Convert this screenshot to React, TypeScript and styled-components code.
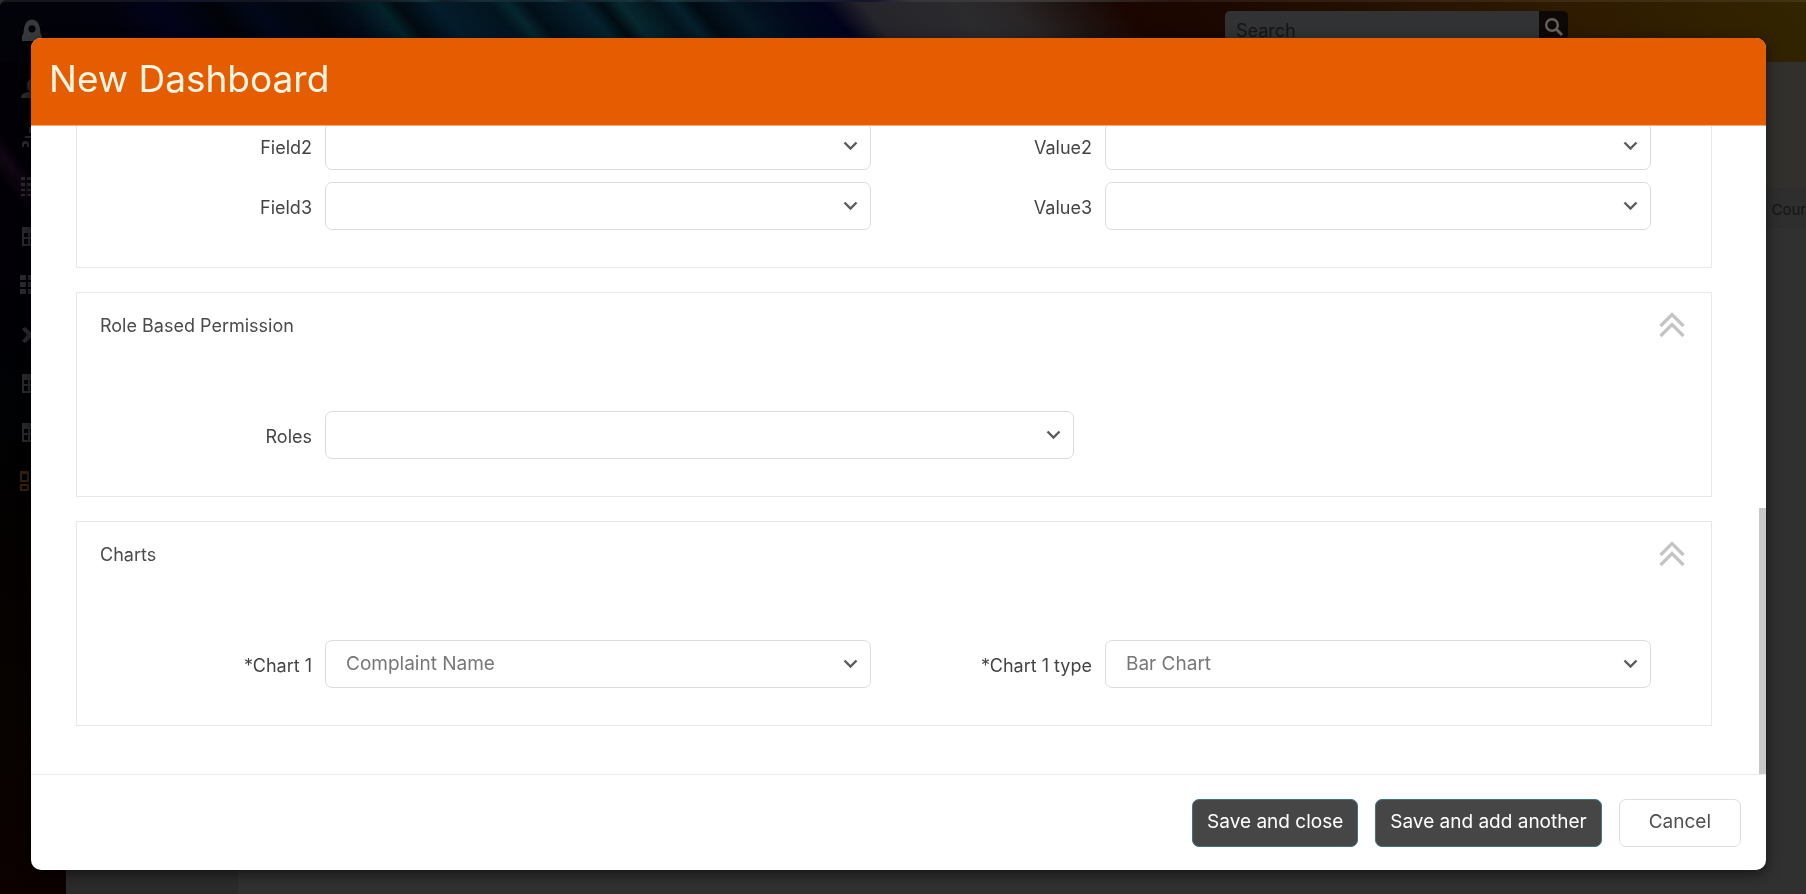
import React, { useId } from 'react';
import styled, { createGlobalStyle } from 'styled-components';

const GlobalStyle = createGlobalStyle`
  *, *::before, *::after { box-sizing: border-box; }
  html, body { margin: 0; height: 100%; background: #2f2f30; }
  body { font-family: Inter, "Open Sans", sans-serif; font-size: 18px; line-height: 24px; color: #444; overflow: hidden; }
  button, input, select { font-family: inherit; margin: 0; }
`;

/* ---------- dimmed application behind the dialog ---------- */

const Shell = styled.div`
  min-height: 100vh;
  display: grid;
  grid-template-columns: 66px 1fr;
  grid-template-rows: 62px 1fr;
  overflow: hidden;
`;

const TopBar = styled.header`
  grid-column: 1 / -1;
  display: flex;
  justify-content: flex-end;
  align-items: flex-start;
  padding: 11px 238px 0 0;
  border-top: 2px solid rgba(255, 255, 255, 0.08);
  border-top-left-radius: 6px;
  background: linear-gradient(
    50deg,
    #020208 0%, #02020c 8%, #02031a 11%, #010308 14%, #02081a 16%, #01050c 19%,
    #020c18 21%, #04222a 23%, #010a10 24%, #041c2c 26%, #02141e 29%, #05262e 30%,
    #020e18 31%, #05222e 34%, #010c12 35%, #06282e 36%, #03141e 38%, #04202c 39%,
    #010a12 40%, #041824 42%, #020c1c 44%, #02021c 47%, #24242a 49%, #2b2b2e 54%,
    #292526 57%, #1e1412 60%, #1a0500 63%, #1c0700 67%, #241000 76%, #2e1a00 86%,
    #332500 100%
  );
`;

const SearchForm = styled.form`
  display: flex;
  width: 343px;
  height: 36px;
  margin-top: -2px;
`;

const SearchInput = styled.input`
  flex: 1;
  min-width: 0;
  border: 0;
  border-radius: 5px 0 0 5px;
  padding: 2px 11px 0;
  background: #313234;
  color: #161616;
  font-size: 18px;
  &::placeholder { color: #161616; opacity: 1; }
`;

const SearchButton = styled.button`
  width: 29px;
  border: 0;
  padding: 0 0 4px;
  border-radius: 0 5px 5px 0;
  background: #0e0806;
  color: #65625f;
  display: flex;
  align-items: center;
  justify-content: center;
`;

const SideBar = styled.nav`
  display: flex;
  flex-direction: column;
  gap: 25px;
  padding: 16px 0 0 20px;
  background:
    linear-gradient(52deg, transparent 38%, rgba(70, 30, 70, 0.22) 46%, transparent 52%) 0 0 / 100% 240px no-repeat,
    linear-gradient(#020006 0%, #020006 26%, #000204 40%, #050100 60%, #070300 78%, #0c0100 100%);
`;

const SideLink = styled.a<{ $active?: boolean }>`
  display: flex;
  height: 24px;
  color: ${({ $active }) => ($active ? '#36200d' : '#2b2b2e')};
`;

const BrandLink = styled.a`
  position: absolute;
  left: 20px;
  top: 19px;
  height: 24px;
  color: #38393b;
`;

const PageArea = styled.main`
  display: grid;
  grid-template-columns: 172px 1fr;
  grid-template-rows: 126px 40px 1fr;
  background: #303031;
`;

const PageTitleBand = styled.div`
  grid-column: 1 / -1;
  background: #32302d;
`;

const ColumnHeader = styled.div`
  grid-column: 1 / -1;
  display: flex;
  justify-content: flex-end;
  align-items: center;
  padding-top: 4px;
  background: #2e2e2f;
  color: #151515;
  font-size: 15px;
`;

const FilterPane = styled.div`
  background: #2b2b2c;
`;

/* ---------- dialog ---------- */

const Overlay = styled.div`
  position: fixed;
  inset: 0;
  padding: 38px 40px 24px 31px;
  display: flex;
`;

const Dialog = styled.section`
  flex: 1;
  min-width: 0;
  display: flex;
  flex-direction: column;
  border-radius: 10px;
  overflow: hidden;
  background: #fff;
  box-shadow: 0 4px 14px rgba(0, 0, 0, 0.55);
`;

const DialogHeader = styled.header`
  flex: none;
  height: 88px;
  padding: 19px 18px 0;
  background: #e65c00;
  border-bottom: 1px solid #f3ad80;
`;

const DialogTitle = styled.h1`
  margin: 0;
  font-size: 37px;
  line-height: 44px;
  font-weight: 400;
  color: #fff6e4;
`;

const DialogBody = styled.div`
  position: relative;
  flex: 1;
  min-height: 0;
  overflow: hidden;
  display: flex;
  flex-direction: column;
  justify-content: flex-end;
  gap: 24px;
  padding: 0 54px 48px 45px;
`;

const ScrollThumb = styled.div`
  position: absolute;
  right: 0;
  bottom: 0;
  width: 7px;
  height: 41%;
  background: #c8c9c9;
`;

const Panel = styled.section`
  flex: none;
  border: 1px solid #e8e8e8;
  padding: 0 60px 37px 14px;
`;

const PanelHeader = styled.header`
  display: flex;
  justify-content: space-between;
  align-items: flex-start;
  height: 118px;
  margin-right: -34px;
  padding: 19px 0 0 9px;
`;

const PanelTitle = styled.h2`
  margin: 2px 0 0;
  font-size: 18px;
  line-height: 24px;
  font-weight: 400;
  color: #4a4a4a;
`;

const CollapseButton = styled.button`
  border: 0;
  padding: 0;
  width: 26px;
  height: 26px;
  background: none;
  color: #c4c4c4;
`;

const FieldGrid = styled.div`
  display: grid;
  grid-template-columns: 1fr 1fr;
  row-gap: 12px;
`;

const FieldCell = styled.div<{ $wide?: boolean }>`
  grid-column: ${({ $wide }) => ($wide ? '1 / -1' : 'auto')};
  display: grid;
  grid-template-columns: ${({ $wide }) => ($wide ? '15% 48%' : '30% 70%')};
`;

const FieldLabel = styled.label`
  padding: 14px 13px 0 0;
  text-align: right;
  color: #444;
`;

const SelectWrap = styled.div`
  position: relative;
  & > svg {
    position: absolute;
    right: 13px;
    top: 19px;
    pointer-events: none;
  }
`;

const Select = styled.select`
  appearance: none;
  display: block;
  width: 100%;
  height: 48px;
  padding: 0 40px 2px 20px;
  border: 1px solid #dcdcdc;
  border-radius: 7px;
  background: #fff;
  color: #777;
  font-size: 19px;
`;

const DialogFooter = styled.footer`
  flex: none;
  display: flex;
  justify-content: flex-end;
  gap: 17px;
  height: 96px;
  padding: 24px 25px 0;
  border-top: 1px solid #ececec;
`;

const Button = styled.button<{ $primary?: boolean }>`
  height: 48px;
  padding: 0 ${({ $primary }) => ($primary ? '14px' : '29px')} 3px;
  border: 1px solid ${({ $primary }) => ($primary ? '#3f7583' : '#dedede')};
  border-radius: 7px;
  background: ${({ $primary }) => ($primary ? '#464646' : '#fff')};
  color: ${({ $primary }) => ($primary ? '#fff' : '#505050')};
  font-size: 19px;
  white-space: nowrap;
`;

/* ---------- icons ---------- */

const Chevron = () => (
  <svg width="15" height="10" viewBox="0 0 15 10" fill="none" stroke="#5c5c5c" strokeWidth="2.4" aria-hidden="true">
    <path d="M1.5 1.5 7.5 7.5 13.5 1.5" />
  </svg>
);

const DoubleChevron = () => (
  <svg width="26" height="26" viewBox="0 0 26 26" fill="none" stroke="currentColor" strokeWidth="3.2" aria-hidden="true">
    <path d="M1.5 14 13 2.5 24.5 14M1.5 24 13 12.5 24.5 24" />
  </svg>
);

const Magnifier = () => (
  <svg width="20" height="20" viewBox="0 0 20 20" fill="none" stroke="currentColor" strokeWidth="2.4" aria-hidden="true">
    <circle cx="8" cy="8" r="5.8" />
    <path d="M12.3 12.3 18 18" strokeWidth="3" />
  </svg>
);

const BrandIcon = () => (
  <svg width="22" height="24" viewBox="0 0 22 24" fill="currentColor" aria-hidden="true">
    <path
      fillRule="evenodd"
      d="M2 22v-4.5l1.6-3.4C3.6 7 6 1 12 .6 18 1 20.4 7 20.4 14.1L22 17.5V22zM12 6.2a3.6 3.6 0 1 0 0 7.2 3.6 3.6 0 0 0 0-7.2z"
    />
  </svg>
);

const iconPaths = {
  user: 'M7 6a5 5 0 0 1 10 0v3a5 5 0 0 1-10 0zM1 20c0-4 3-5 7-6h10c4 1 6 2 6 6z',
  org: 'M9 0h6v6H9zM11 6h2v4h-2zM5 9h16v2H5zM2 20v-3a3 3 0 0 1 3-3h1a3 3 0 0 1 3 3v3H7v-3H4v3zM12 14h6v6h-6z',
  list: 'M1 1h4v3H1zM7 1h17v3H7zM1 7h4v3H1zM7 7h17v3H7zM1 13h4v2H1zM7 13h17v2H7zM1 18h4v2H1zM7 18h17v2H7z',
  calendar: 'M2 2h20v19H2zM4 8v4h4V8zm6 0v4h4V8zm6 0v4h4V8zM4 14v5h4v-5zm6 0v5h4v-5zm6 0v5h4v-5z',
  grid: 'M0 1h6v5H0zM8 1h6v5H8zM16 1h6v5h-6zM0 8h6v5H0zM8 8h6v5H8zM16 8h6v5h-6zM0 15h6v5H0zM8 15h6v5H8zM16 15h6v5h-6z',
  tools: 'M2 6l3-2 6 5 6-5 3 2-5 6 5 6-3 2-6-5-6 5-3-2 5-6z',
  board: 'M0 1h9v11H0zM2 4v6h5V4zM11 1h9v6h-9zM0 14h9v7H0zM2 16v3h5v-3zM11 9h9v12h-9z',
};

type IconName = keyof typeof iconPaths;

const MenuIcon = ({ name }: { name: IconName }) => (
  <svg width="24" height="22" viewBox="0 0 24 22" fill="currentColor" fillRule="evenodd" aria-hidden="true">
    <path d={iconPaths[name]} />
  </svg>
);

const menu: { label: string; icon: IconName }[] = [
  { label: 'Users', icon: 'user' },
  { label: 'Organisation', icon: 'org' },
  { label: 'Lists', icon: 'list' },
  { label: 'Calendar', icon: 'calendar' },
  { label: 'Modules', icon: 'grid' },
  { label: 'Tools', icon: 'tools' },
  { label: 'Schedule', icon: 'calendar' },
  { label: 'Reports', icon: 'calendar' },
  { label: 'Dashboards', icon: 'board' },
];

/* ---------- form parts ---------- */

type FieldProps = { label: string; value?: string; wide?: boolean };

const SelectField = ({ label, value = '', wide }: FieldProps) => {
  const id = useId();
  return (
    <FieldCell $wide={wide}>
      <FieldLabel htmlFor={id}>{label}</FieldLabel>
      <SelectWrap>
        <Select id={id} defaultValue={value}>
          <option value={value}>{value}</option>
        </Select>
        <Chevron />
      </SelectWrap>
    </FieldCell>
  );
};

const FormPanel = ({ title, children }: { title?: string; children: React.ReactNode }) => (
  <Panel>
    {title && (
      <PanelHeader>
        <PanelTitle>{title}</PanelTitle>
        <CollapseButton type="button" aria-label={`Collapse ${title}`}>
          <DoubleChevron />
        </CollapseButton>
      </PanelHeader>
    )}
    <FieldGrid>{children}</FieldGrid>
  </Panel>
);

export default function App() {
  return (
    <>
      <GlobalStyle />
      <Shell>
        <TopBar>
          <BrandLink href="#home" aria-label="Home">
            <BrandIcon />
          </BrandLink>
          <SearchForm role="search">
            <SearchInput type="text" placeholder="Search" aria-label="Search" />
            <SearchButton type="button" aria-label="Run search">
              <Magnifier />
            </SearchButton>
          </SearchForm>
        </TopBar>
        <SideBar>
          {menu.map(({ label, icon }) => (
            <SideLink key={label} href="#menu" aria-label={label} $active={icon === 'board'}>
              <MenuIcon name={icon} />
            </SideLink>
          ))}
        </SideBar>
        <PageArea>
          <PageTitleBand />
          <ColumnHeader>Cour</ColumnHeader>
          <FilterPane />
        </PageArea>
      </Shell>

      <Overlay>
        <Dialog role="dialog" aria-modal="true" aria-labelledby="dialog-title">
          <DialogHeader>
            <DialogTitle id="dialog-title">New Dashboard</DialogTitle>
          </DialogHeader>
          <DialogBody>
            <FormPanel>
              <SelectField label="Field2" />
              <SelectField label="Value2" />
              <SelectField label="Field3" />
              <SelectField label="Value3" />
            </FormPanel>
            <FormPanel title="Role Based Permission">
              <SelectField label="Roles" wide />
            </FormPanel>
            <FormPanel title="Charts">
              <SelectField label="*Chart 1" value="Complaint Name" />
              <SelectField label="*Chart 1 type" value="Bar Chart" />
            </FormPanel>
            <ScrollThumb />
          </DialogBody>
          <DialogFooter>
            <Button type="button" $primary>Save and close</Button>
            <Button type="button" $primary>Save and add another</Button>
            <Button type="button">Cancel</Button>
          </DialogFooter>
        </Dialog>
      </Overlay>
    </>
  );
}
